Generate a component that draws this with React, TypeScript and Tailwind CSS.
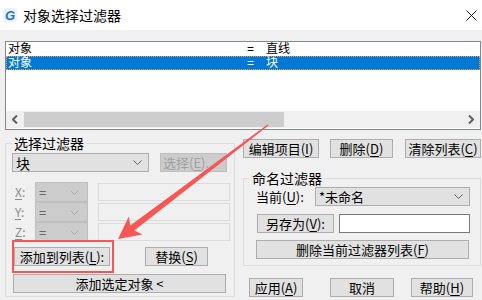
import React from "react";

const Chevron = ({ color = "#606060" }: { color?: string }) => (
  <svg width="9" height="5" viewBox="0 0 9 5" className="shrink-0">
    <polyline points="0.5,0.5 4.5,4.5 8.5,0.5" fill="none" stroke={color} strokeWidth="1" />
  </svg>
);

const U = ({ c }: { c: string }) => <span className="underline underline-offset-2">{c}</span>;

const Btn = ({
  w,
  children,
  className = "",
}: {
  w: string;
  children: React.ReactNode;
  className?: string;
}) => (
  <div
    className={`h-[19px] ${w} shrink-0 bg-[#e1e1e1] border border-[#adadad] flex items-center justify-center text-[13px] leading-none text-black whitespace-nowrap ${className}`}
  >
    {children}
  </div>
);

export default function App() {
  return (
    <div className="relative w-[482px] h-[300px] overflow-hidden bg-[#f0f0f0] font-['Noto_Sans_CJK_SC','Noto_Sans',sans-serif] text-black select-none">
      {/* Title bar */}
      <div className="h-[30px] bg-white flex items-center">
        <div className="ml-[3px] w-[14px] h-[14px] rounded-[3px] bg-[#eaf2fc] flex items-center justify-center">
          <span className="text-[13px] leading-none font-bold italic text-[#1e6fe0] font-['Liberation_Sans',sans-serif]">G</span>
        </div>
        <span className="ml-[6px] text-[14px] leading-none">对象选择过滤器</span>
        <div className="ml-auto mr-[5px] w-[11px] h-[11px]">
          <svg width="11" height="11" viewBox="0 0 11 11">
            <line x1="0.5" y1="0.5" x2="10.5" y2="10.5" stroke="#000" strokeWidth="0.9" />
            <line x1="10.5" y1="0.5" x2="0.5" y2="10.5" stroke="#000" strokeWidth="0.9" />
          </svg>
        </div>
      </div>

      <div className="pl-[5px] pt-[11px] flex flex-col">
        {/* List */}
        <div className="w-[476px] h-[89px] border border-[#828790] bg-white flex flex-col">
          <div className="h-[14px] flex items-center text-[12px] leading-[14px] font-['Liberation_Sans','Noto_Sans_CJK_SC',sans-serif]">
            <span className="ml-[2px] w-[239px]">对象</span>
            <span className="w-[19px]">=</span>
            <span>直线</span>
          </div>
          <div className="h-[14px] flex items-center text-[12px] leading-[14px] font-['Liberation_Sans','Noto_Sans_CJK_SC',sans-serif] bg-[#0078d7] text-white outline outline-1 outline-dotted outline-[#f0a040] -outline-offset-1">
            <span className="ml-[2px] w-[239px]">对象</span>
            <span className="w-[19px]">=</span>
            <span>块</span>
          </div>
          <div className="flex-1" />
          <div className="h-[17px] mb-[1px] bg-[#f0f0f0] flex items-center">
            <div className="w-[18px] flex items-center justify-center">
              <svg width="6" height="9" viewBox="0 0 6 9">
                <polyline points="5,0.5 1,4.5 5,8.5" fill="none" stroke="#606060" strokeWidth="2" />
              </svg>
            </div>
            <div className="w-[260px] h-[15px] bg-[#cdcdcd]" />
            <div className="flex-1" />
            <div className="w-[18px] flex items-center justify-center">
              <svg width="6" height="9" viewBox="0 0 6 9">
                <polyline points="1,0.5 5,4.5 1,8.5" fill="none" stroke="#606060" strokeWidth="2" />
              </svg>
            </div>
          </div>
        </div>

        <div className="flex">
          {/* Left group: 选择过滤器 */}
          <div className="relative mt-[13px] w-[230px] h-[154px] border border-[#dcdcdc] pl-[6px] pt-[9px] flex flex-col">
            <span className="absolute left-[6px] top-[-9px] px-[2px] bg-[#f0f0f0] text-[14px] leading-[16px]">选择过滤器</span>
            <div className="flex">
              <div className="w-[137px] h-[19px] bg-[#e1e1e1] border border-[#adadad] flex items-center pl-[3px] pr-[6px] text-[14px] leading-none">
                <span className="flex-1">块</span>
                <Chevron />
              </div>
              <div className="ml-[11px] w-[67px] h-[19px] bg-[#cccccc] border border-[#bfbfbf] flex items-center pl-[2px] text-[13px] leading-none text-[#a0a0a0] whitespace-nowrap">
                选择(<U c="E" />).
              </div>
            </div>

            <div className="mt-[10px] flex flex-col">
              {["X", "Y", "Z"].map((l) => (
                <div key={l} className="h-[20px] flex items-center">
                  <span className="w-[23px] pl-[3px] text-[12px] leading-none text-[#8a8a8a]">
                    <U c={l} />:
                  </span>
                  <div className="w-[53px] h-[20px] bg-[#cccccc] border border-[#bfbfbf] flex items-center pl-[3px] pr-[8px] text-[13px] leading-none text-[#505050]">
                    <span className="flex-1">=</span>
                    <Chevron color="#a8a8a8" />
                  </div>
                  <div className="ml-[10px] w-[132px] h-[18px] bg-[#f0f0f0] border border-[#dcdcdc]" />
                </div>
              ))}
            </div>

            <div className="mt-[5px] flex">
              <Btn w="w-[96px]" className="ml-[2px] h-[18px]">
                添加到列表(<U c="L" />):
              </Btn>
              <Btn w="w-[63px]" className="ml-[35px] h-[18px]">
                替换(<U c="S" />)
              </Btn>
            </div>
            <Btn w="w-[213px]" className="mt-[8px] ml-[1px] h-[18px]">
              添加选定对象 &lt;
            </Btn>
          </div>

          {/* Right column */}
          <div className="ml-[8px] w-[238px] flex flex-col">
            <div className="mt-[9px] flex">
              <Btn w="w-[76px]" className="h-[18px]">
                编辑项目(<U c="I" />)
              </Btn>
              <Btn w="w-[63px]" className="ml-[11px] h-[18px]">
                删除(<U c="D" />)
              </Btn>
              <Btn w="w-[76px]" className="ml-[12px] h-[18px]">
                清除列表(<U c="C" />)
              </Btn>
            </div>

            <div className="relative mt-[20px] w-[238px] h-[88px] border border-[#dcdcdc] flex flex-col pl-[12px] pt-[8px]">
              <span className="absolute left-[6px] top-[-9px] px-[2px] bg-[#f0f0f0] text-[14px] leading-[16px]">命名过滤器</span>
              <div className="flex items-center">
                <span className="w-[59px] text-[13px] leading-none whitespace-nowrap">
                  当前(<U c="U" />):
                </span>
                <div className="w-[155px] h-[19px] bg-[#e1e1e1] border border-[#adadad] flex items-center pl-[3px] pr-[6px] text-[13px] leading-none">
                  <span className="flex-1">*未命名</span>
                  <Chevron />
                </div>
              </div>
              <div className="mt-[8px] flex">
                <Btn w="w-[77px]" className="ml-[1px] h-[19px]">
                  另存为(<U c="V" />):
                </Btn>
                <div className="ml-[5px] w-[131px] h-[19px] bg-white border border-[#7a7a7a]" />
              </div>
              <Btn w="w-[213px]" className="mt-[7px] h-[19px]">
                删除当前过滤器列表(<U c="F" />)
              </Btn>
            </div>

            <div className="mt-[12px] flex">
              <Btn w="w-[54px]" className="ml-[6px] h-[19px]">
                应用(<U c="A" />)
              </Btn>
              <Btn w="w-[64px]" className="ml-[27px] h-[19px]">
                取消
              </Btn>
              <Btn w="w-[62px]" className="ml-[17px] h-[19px]">
                帮助(<U c="H" />)
              </Btn>
            </div>
          </div>
        </div>
      </div>

      {/* Annotation overlay */}
      <div className="absolute left-[12px] top-[240px] w-[102px] h-[33px] border-2 border-[#f85555] pointer-events-none" />
      <svg className="absolute left-0 top-0 pointer-events-none" width="482" height="300" viewBox="0 0 482 300">
        <polygon
          points="118,239 142.5,234.5 134.3,230.6 268.5,125.6 267.5,124.4 130.3,225.6 128.8,216.6"
          fill="#f85555"
        />
      </svg>
    </div>
  );
}
